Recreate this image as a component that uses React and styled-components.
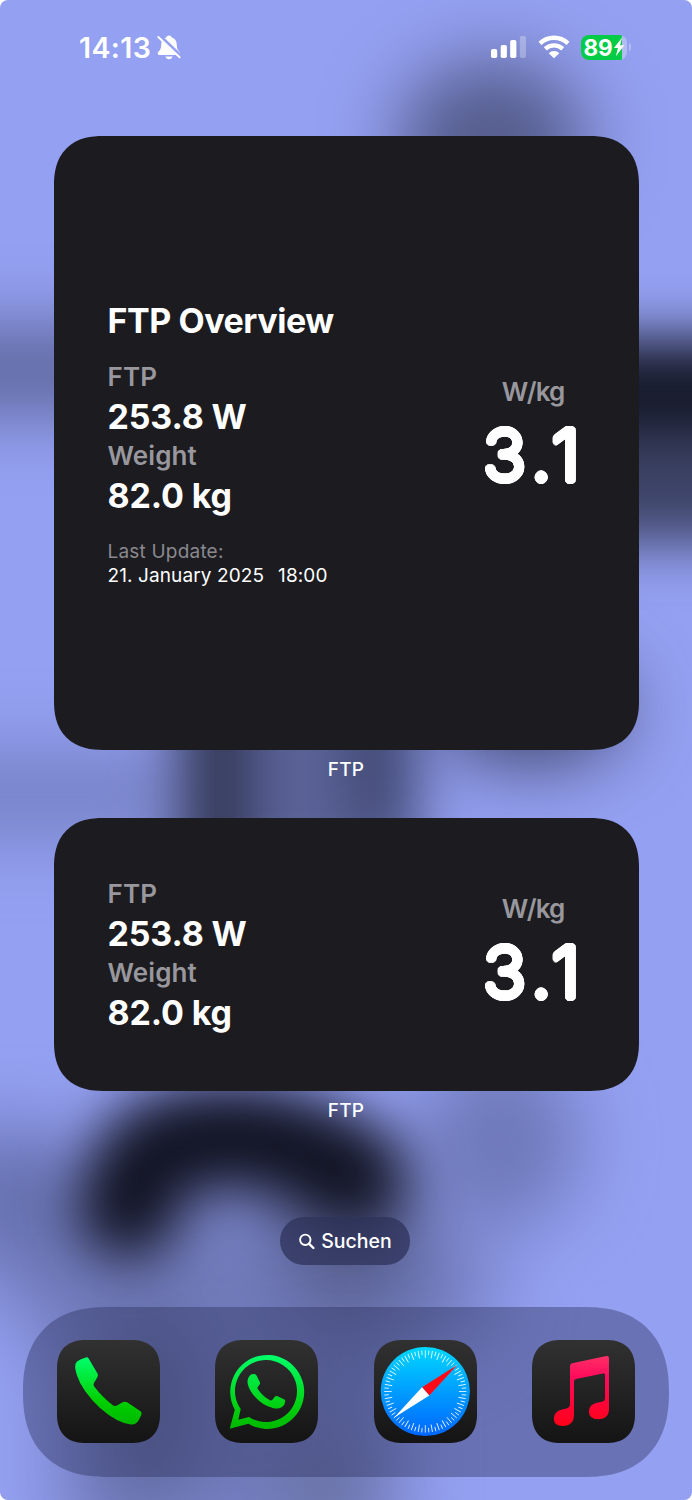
import React from "react";
import styled, { createGlobalStyle } from "styled-components";

const apps = [
  { name: "Phone", Icon: PhoneIcon },
  { name: "WhatsApp", Icon: WhatsAppIcon },
  { name: "Safari", Icon: SafariIcon },
  { name: "Music", Icon: MusicIcon },
];

const data = {
  ftp: "253.8 W",
  weight: "82.0 kg",
  ratio: "3.1",
  date: "21. January 2025",
  time: "18:00",
};

function App() {
  return (
    <Screen>
      <GlobalStyle />
      <Wallpaper />
      <StatusBar>
        <Clock>14:13</Clock>
        <BellIcon />
        <Spacer />
        <SignalIcon />
        <WifiIcon />
        <Battery>
          <Charge>
            89
            <svg width="12" height="20" viewBox="0 0 11 20">
              <path d="M8.6 0.6 0.4 11h4L2.3 19.2 10.9 8.2H6.6z" fill="#fff" />
            </svg>
          </Charge>
          <BatteryTip />
        </Battery>
      </StatusBar>
      <Widget $height={614.5}>
        <Title>FTP Overview</Title>
        <Metrics />
        <Update>
          <UpdateLabel>Last Update:</UpdateLabel>
          <UpdateDate>
            <span>{data.date}</span>
            <span>{data.time}</span>
          </UpdateDate>
        </Update>
      </Widget>
      <WidgetName>FTP</WidgetName>
      <Widget $height={273}>
        <Metrics />
      </Widget>
      <WidgetName>FTP</WidgetName>
      <Search>
        <svg width="16" height="17" viewBox="0 0 16 17" fill="none">
          <circle cx="6.3" cy="6.8" r="5.2" stroke="#fff" strokeWidth="1.9" />
          <path
            d="M10.2 10.8 14.4 15"
            stroke="#fff"
            strokeWidth="2.4"
            strokeLinecap="round"
          />
        </svg>
        Suchen
      </Search>
      <Dock>
        {apps.map(({ name, Icon }) => (
          <AppButton key={name} aria-label={name}>
            <Icon />
          </AppButton>
        ))}
      </Dock>
    </Screen>
  );
}

export default App;

function Metrics() {
  return (
    <MetricsRow>
      <div>
        <Label>FTP</Label>
        <Value>{data.ftp}</Value>
        <Label>Weight</Label>
        <Value>{data.weight}</Value>
      </div>
      <Ratio>
        <Label $tight>W/kg</Label>
        <BigNumber>{data.ratio}</BigNumber>
      </Ratio>
    </MetricsRow>
  );
}

function Blur({ id, amount }) {
  return (
    <filter
      id={id}
      filterUnits="userSpaceOnUse"
      x="-150"
      y="-150"
      width="1000"
      height="1800"
      colorInterpolationFilters="sRGB"
    >
      <feGaussianBlur stdDeviation={amount} />
    </filter>
  );
}

function Wallpaper() {
  return (
    <Backdrop viewBox="0 0 692 1500" preserveAspectRatio="none">
      <defs>
        <Blur id="soft" amount="28" />
        <Blur id="wide" amount="36" />
      </defs>
      <rect width="692" height="1500" fill="#94a0f1" />
      <g filter="url(#wide)">
        <ellipse cx="492" cy="140" rx="95" ry="80" fill="#555d8c" />
        <rect x="-150" y="330" width="300" height="80" fill="#5a6397" />
        <rect x="-150" y="755" width="330" height="80" fill="#7480c2" />
        <ellipse cx="530" cy="710" rx="95" ry="55" fill="#40466c" />
        <ellipse cx="10" cy="1200" rx="75" ry="75" fill="#6570ae" />
        <ellipse cx="500" cy="1140" rx="80" ry="90" fill="#6e79b9" />
        <ellipse cx="250" cy="1290" rx="250" ry="90" fill="#717bbb" />
        <ellipse cx="350" cy="1240" rx="70" ry="90" fill="#5c6496" />
        <rect x="60" y="1330" width="340" height="220" fill="#717bbc" />
        <ellipse cx="150" cy="1410" rx="40" ry="100" fill="#5c6596" />
        <ellipse cx="325" cy="1500" rx="40" ry="60" fill="#68719f" />
      </g>
      <g filter="url(#soft)">
        <path d="M560 345h280v198H560z" fill="#3d4366" />
        <path d="M560 340h280v92H560z" fill="#141726" />
        <path d="M172 670h250v210H172z" fill="#5a6297" />
        <path d="M190 670h55v220h-55z" fill="#2c314b" />
        <path d="M355 690h50v140h-50z" fill="#3c446c" />
      </g>
      <path
        d="M128 1207C140 1150 165 1142 215 1138S310 1150 352 1178"
        fill="none"
        stroke="#111322"
        strokeWidth="106"
        strokeLinecap="round"
        filter="url(#soft)"
      />
    </Backdrop>
  );
}

function BellIcon() {
  return (
    <svg width="26" height="27" viewBox="0 0 26 27">
      <path
        d="M13 1.5c-1.7 0-2.5.9-2.8 2C6.500 4.700 5.300 7.600 5.200 11c-.1 4-1.200 5.200-2.900 6.900-1.100 1.100-.7 3.100.9 3.100h19.600c1.600 0 2-2 .9-3.100-1.700-1.700-2.800-2.900-2.900-6.900-.1-3.400-1.300-6.300-5-7.500-.3-1.100-1.100-2-2.800-2zM9.500 22.500c.4 1.700 1.700 2.800 3.500 2.800s3.100-1.100 3.500-2.800z"
        fill="#fff"
      />
      <path d="M3.500 2 25 22.500" stroke="#94a0f1" strokeWidth="4" />
      <path
        d="M2.300 3 23.600 23.300"
        stroke="#fff"
        strokeWidth="1.900"
        strokeLinecap="round"
      />
    </svg>
  );
}

function SignalIcon() {
  return (
    <svg width="36" height="24" viewBox="0 0 36 24" fill="#fff">
      <rect x="0" y="14" width="6.200" height="9" rx="1.800" />
      <rect x="9.700" y="10" width="6.200" height="13" rx="1.800" />
      <rect x="19.200" y="5" width="6.200" height="18" rx="1.800" />
      <rect x="28.800" y="1" width="6.200" height="22" rx="1.800" opacity=".28" />
    </svg>
  );
}

function WifiIcon() {
  return (
    <WifiSvg width="32" height="24" viewBox="0 0 32 24" fill="none">
      <path d="M2 8.300a20.300 20.300 0 0 1 28 0" stroke="#fff" strokeWidth="4.400" />
      <path d="M7.300 13.900a12.700 12.700 0 0 1 17.400 0" stroke="#fff" strokeWidth="4.300" />
      <path d="M16 23.300 10.700 18.200a7.500 7.500 0 0 1 10.600 0z" fill="#fff" />
    </WifiSvg>
  );
}

function PhoneIcon() {
  return (
    <svg width="103" height="103" viewBox="0 0 103 103">
      <defs>
        <linearGradient id="phone" x1="0" y1="0" x2="0" y2="1">
          <stop offset="0" stopColor="#00ff6c" />
          <stop offset=".65" stopColor="#00d000" />
          <stop offset="1" stopColor="#00b800" />
        </linearGradient>
      </defs>
      <path
        d="M31.500 18.200 40.500 33.500Q41.500 35.300 40.400 37.300L36.900 43Q36 44.800 37.200 46.600 45 57 55.500 65 57.500 66.500 60 65.500L65.500 62.300Q68 61 70.200 62.300L83.500 71.300Q85.200 72.600 84.400 74.800L81.500 80.500Q79 84.900 74 84.500 60 83 43 68 25 51 19.800 35 16.500 25 20 21.500 23.500 18.800 28.800 17.500 30.500 16.900 31.500 18.200Z"
        fill="url(#phone)"
      />
    </svg>
  );
}

function WhatsAppIcon() {
  return (
    <svg width="103" height="103" viewBox="0 0 103 103">
      <defs>
        <linearGradient
          id="chat"
          x1="0"
          y1="14"
          x2="0"
          y2="89"
          gradientUnits="userSpaceOnUse"
        >
          <stop offset="0" stopColor="#00ff6c" />
          <stop offset=".7" stopColor="#00d010" />
          <stop offset="1" stopColor="#00b800" />
        </linearGradient>
      </defs>
      <g fill="url(#chat)">
        <path
          fillRule="evenodd"
          d="M14.700 88.700 19.800 69.800A37 37 0 1 1 33.400 83.800ZM25.700 69 23.300 79.700 34 77A31 31 0 1 0 25.700 69Z"
        />
        <path d="M36 34.400Q38 33.600 40.300 34.300 41.300 34.700 41.800 36L45 42.500Q45.300 43.800 44.300 45L42.600 47.300Q42.200 48.300 42.900 49.200 48 56.500 55 60.200 56.500 60.800 57.400 59.700L60 56.500Q60.800 55.600 62 56L69 59.300Q70.500 60 70.200 61.500 70 65 67 67 63.500 69.300 58.500 68.300 46 65 38 54.500 33 48 32.500 42.500 32.400 37 36 34.400Z" />
      </g>
    </svg>
  );
}

function SafariIcon() {
  const ticks = Array.from({ length: 72 }, (_, i) => i * 5);

  return (
    <svg width="103" height="103" viewBox="0 0 103 103">
      <defs>
        <linearGradient id="compass" x1="0" y1="0" x2="0" y2="1">
          <stop offset="0" stopColor="#00d8ff" />
          <stop offset=".5" stopColor="#009dff" />
          <stop offset="1" stopColor="#0066ff" />
        </linearGradient>
      </defs>
      <circle cx="51.300" cy="51.500" r="44.600" fill="url(#compass)" />
      {ticks.map((angle) => (
        <path
          key={angle}
          d={angle % 10 === 0 ? "M51.300 10.400v7.500" : "M51.300 10.400v4.500"}
          stroke="#fff"
          strokeOpacity=".9"
          strokeWidth=".9"
          transform={`rotate(${angle} 51.300 51.500)`}
        />
      ))}
      <path d="M83.200 25 48 47.300 55.300 55.500Z" fill="#ff0b18" />
      <path d="M20 77.800 48 47.300 55.300 55.500Z" fill="#fff" />
    </svg>
  );
}

function MusicIcon() {
  return (
    <svg width="103" height="103" viewBox="0 0 103 103">
      <defs>
        <linearGradient id="note" x1="0" y1="0" x2="0" y2="1">
          <stop offset="0" stopColor="#ff3068" />
          <stop offset=".3" stopColor="#ff0a5c" />
          <stop offset="1" stopColor="#ff0018" />
        </linearGradient>
      </defs>
      <path
        d="M38 26Q38 23.700 40.200 23.200L74.500 16.100Q77 15.700 77 18.300V69Q77 79 66 79.300 57 79 56.800 71.500 57 64.300 65 62.700L70 61.800Q73 61 73 58V35Q73 33 71 33.400L44 39.100Q42 39.500 42 41.500V75Q42 85.500 30.500 86.100 21.800 86 21.800 78.500 22 71.300 30 69.500L34.500 68.500Q38 67.500 38 64Z"
        fill="url(#note)"
      />
    </svg>
  );
}

const GlobalStyle = createGlobalStyle`
  body {
    margin: 0;
    background: #fff;
  }

  svg {
    display: block;
    flex-shrink: 0;
  }
`;

const Screen = styled.main`
  position: relative;
  box-sizing: border-box;
  display: flex;
  flex-direction: column;
  align-items: center;
  width: 692px;
  height: 1500px;
  overflow: hidden;
  border-radius: 8px;
  isolation: isolate;
  color: #fff;
  font-family: Inter, "Liberation Sans", sans-serif;
`;

/* sits behind everything on the home screen */
const Backdrop = styled.svg`
  position: absolute;
  inset: 0;
  z-index: -1;
  width: 100%;
  height: 100%;
`;

const StatusBar = styled.header`
  box-sizing: border-box;
  display: flex;
  align-items: center;
  width: 100%;
  height: 135.500px;
  padding: 0 61px 41px 79px;
`;

const Clock = styled.span`
  width: 77px;
  font-size: 28.500px;
  font-weight: 600;
  letter-spacing: 0.4px;
`;

const Spacer = styled.div`
  flex: 1;
`;

const WifiSvg = styled.svg`
  margin-left: 11px;
`;

const Battery = styled.div`
  display: flex;
  align-items: center;
  gap: 1.500px;
  margin-left: 11px;
`;

const Charge = styled.div`
  display: flex;
  align-items: center;
  justify-content: center;
  box-sizing: border-box;
  width: 46px;
  height: 25px;
  border-radius: 8px;
  background: linear-gradient(90deg, #05cc47 41px, #b3bbf3 41px);
  font-size: 22.500px;
  font-weight: 700;
  letter-spacing: -0.1px;
`;

const BatteryTip = styled.div`
  width: 2.500px;
  height: 8px;
  border-radius: 0 4px 4px 0;
  background: #b3bbf3;
`;

const Widget = styled.section`
  box-sizing: border-box;
  display: flex;
  flex-direction: column;
  justify-content: center;
  flex-shrink: 0;
  width: 585px;
  height: ${({ $height }) => $height}px;
  padding: 0 54px;
  border-radius: 44px;
  background: #1c1b1f;

  @supports (corner-shape: squircle) {
    border-radius: 49px;
    corner-shape: superellipse(1.25);
  }
`;

const Title = styled.h1`
  margin: 0 0 17px;
  padding-top: 2px;
  font-size: 34px;
  font-weight: 700;
  line-height: 42px;
  letter-spacing: -0.45px;
`;

const MetricsRow = styled.div`
  display: flex;
  align-items: center;
  justify-content: space-between;
`;

const Label = styled.div`
  color: #98979d;
  font-size: 26px;
  font-weight: 600;
  line-height: 35px;
  letter-spacing: ${({ $tight }) => ($tight ? "-0.9px" : "0.1px")};
`;

const Value = styled.div`
  padding-top: 2px;
  font-size: 34px;
  font-weight: 700;
  line-height: 41.300px;
  letter-spacing: -0.15px;
`;

const Ratio = styled.div`
  display: flex;
  flex-direction: column;
  align-items: center;
  gap: 3.500px;
  width: 103px;
  padding-bottom: 4.500px;
`;

/* thin digits thickened by a ring of shadows, so that the ends come out round */
const ring = (radius) =>
  Array.from({ length: 24 }, (_, i) => {
    const angle = (i * Math.PI) / 12;
    const x = (Math.cos(angle) * radius).toFixed(2);
    const y = (Math.sin(angle) * radius).toFixed(2);
    return `${x}px ${y}px 0 #fff`;
  }).join(", ");

const BigNumber = styled.div`
  padding-left: 3px;
  font-size: 71.500px;
  font-weight: 300;
  line-height: 84px;
  letter-spacing: 6.500px;
  text-shadow: ${ring(2.7)};
`;

const Update = styled.div`
  margin-top: 24px;
  font-size: 19px;
  line-height: 23.500px;
  letter-spacing: 0.1px;
`;

const UpdateLabel = styled.div`
  color: #8a898f;
  letter-spacing: 0.2px;
`;

const UpdateDate = styled.div`
  display: flex;
  gap: 14px;
`;

const WidgetName = styled.div`
  height: 68px;
  flex-shrink: 0;
  font-size: 19px;
  font-weight: 500;
  line-height: 40px;
  letter-spacing: 0.3px;
`;

const Search = styled.div`
  display: flex;
  align-items: center;
  justify-content: center;
  gap: 6px;
  box-sizing: border-box;
  flex-shrink: 0;
  width: 130px;
  height: 48px;
  margin: 58px 2px 0 0;
  padding-left: 1px;
  border-radius: 24px;
  background: rgba(46, 51, 90, 0.75);
  font-size: 19.500px;
  font-weight: 500;
`;

const Dock = styled.nav`
  box-sizing: border-box;
  display: flex;
  align-items: center;
  justify-content: space-between;
  flex-shrink: 0;
  width: 646px;
  height: 170px;
  margin-top: 41.500px;
  padding: 0 33.500px;
  border-radius: 76px;
  background: rgba(46, 50, 96, 0.42);

  @supports (corner-shape: squircle) {
    border-radius: 85px;
    corner-shape: superellipse(1.25);
  }
`;

const AppButton = styled.button`
  width: 103px;
  height: 103px;
  margin: 0;
  padding: 0;
  overflow: hidden;
  border: none;
  border-radius: 24px;
  background: linear-gradient(#313131, #141414);

  @supports (corner-shape: squircle) {
    border-radius: 29px;
    corner-shape: superellipse(1.25);
  }
`;
